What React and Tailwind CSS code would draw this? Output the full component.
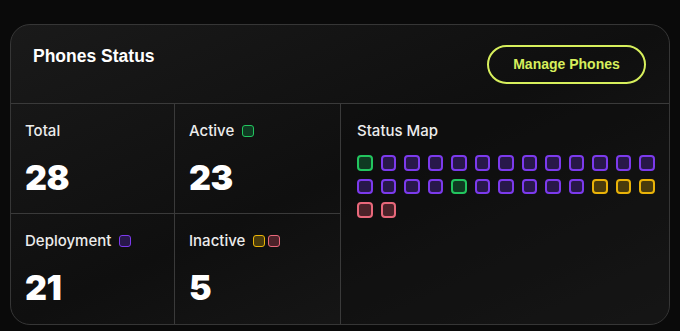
import React from 'react';

const SQUARE_STYLES = {
  active: 'border-[#22c55e] bg-[#0f3a22]',
  deploy: 'border-[#7c3aed] bg-[#28184a]',
  idle: 'border-[#eab308] bg-[#4a3b0c]',
  off: 'border-[#e8687a] bg-[#4b2229]',
};

const phones = [
  'active', 'deploy', 'deploy', 'deploy', 'deploy', 'deploy', 'deploy', 'deploy', 'deploy', 'deploy', 'deploy', 'deploy', 'deploy',
  'deploy', 'deploy', 'deploy', 'deploy', 'active', 'deploy', 'deploy', 'deploy', 'deploy', 'deploy', 'idle', 'idle', 'idle',
  'off', 'off',
];

function Dot({ status, small }) {
  const size = small
    ? 'w-[12px] h-[12px] rounded-[3px] border-[1.5px]'
    : 'w-[15.5px] h-[15.5px] rounded-[4px] border-2';
  return <span className={`inline-block ${size} ${SQUARE_STYLES[status]}`} />;
}

function StatCell({ label, value, dots = [], className = '' }) {
  return (
    <div className={`pl-[14px] pt-[17px] ${className}`}>
      <div className="flex items-center gap-[8px] h-5">
        <span className="text-[15px] font-medium text-[#ececec] font-['Inter',sans-serif]">{label}</span>
        {dots.length > 0 && (
          <span className="flex gap-[3px]">
            {dots.map((d, i) => <Dot key={i} status={d} small />)}
          </span>
        )}
      </div>
      <div className="mt-[20px] text-[34px] leading-none font-black tracking-[-0.5px] text-white font-['Inter',sans-serif]">
        {value}
      </div>
    </div>
  );
}

export default function App() {
  return (
    <div className="w-[680px] h-[331px] bg-[#0a0a0a] pt-6 px-2.5 pb-1.5">
      <div className="h-full rounded-[20px] border border-[#363636] overflow-hidden bg-linear-to-br from-[#1a1a1a] via-[#0f0f0f] to-[#1c1c1c] flex flex-col">
        {/* Header */}
        <div className="flex justify-between items-start pl-[22px] pr-[23px] pt-[19px] pb-[19px] border-b border-[#3a3a3a]">
          <h2 className="text-[17.5px] leading-6 font-bold text-white font-['Liberation_Sans',sans-serif]">
            Phones Status
          </h2>
          <button className="mt-px h-[39px] w-[159px] rounded-full border-2 border-[#d7ef5c] text-[#d7ef5c] text-[14px] font-bold font-['Liberation_Sans',sans-serif]">
            Manage Phones
          </button>
        </div>

        {/* Body */}
        <div className="flex-1 grid grid-cols-[164px_166px_1fr] grid-rows-2">
          <StatCell label="Total" value="28" className="border-r border-b border-[#3a3a3a]" />
          <StatCell label="Active" value="23" dots={['active']} className="border-r border-b border-[#3a3a3a]" />
          <div className="row-span-2 pl-[16px] pt-[17px] bg-[#0d0d0d]/40">
            <div className="h-5 flex items-center text-[15px] font-medium text-[#ececec] font-['Inter',sans-serif]">Status Map</div>
            <div className="mt-[14px] flex flex-wrap gap-[8px] pr-[12px]">
              {phones.map((p, i) => <Dot key={i} status={p} />)}
            </div>
          </div>
          <StatCell label="Deployment" value="21" dots={['deploy']} className="border-r border-[#3a3a3a]" />
          <StatCell label="Inactive" value="5" dots={['idle', 'off']} className="border-r border-[#3a3a3a]" />
        </div>
      </div>
    </div>
  );
}
